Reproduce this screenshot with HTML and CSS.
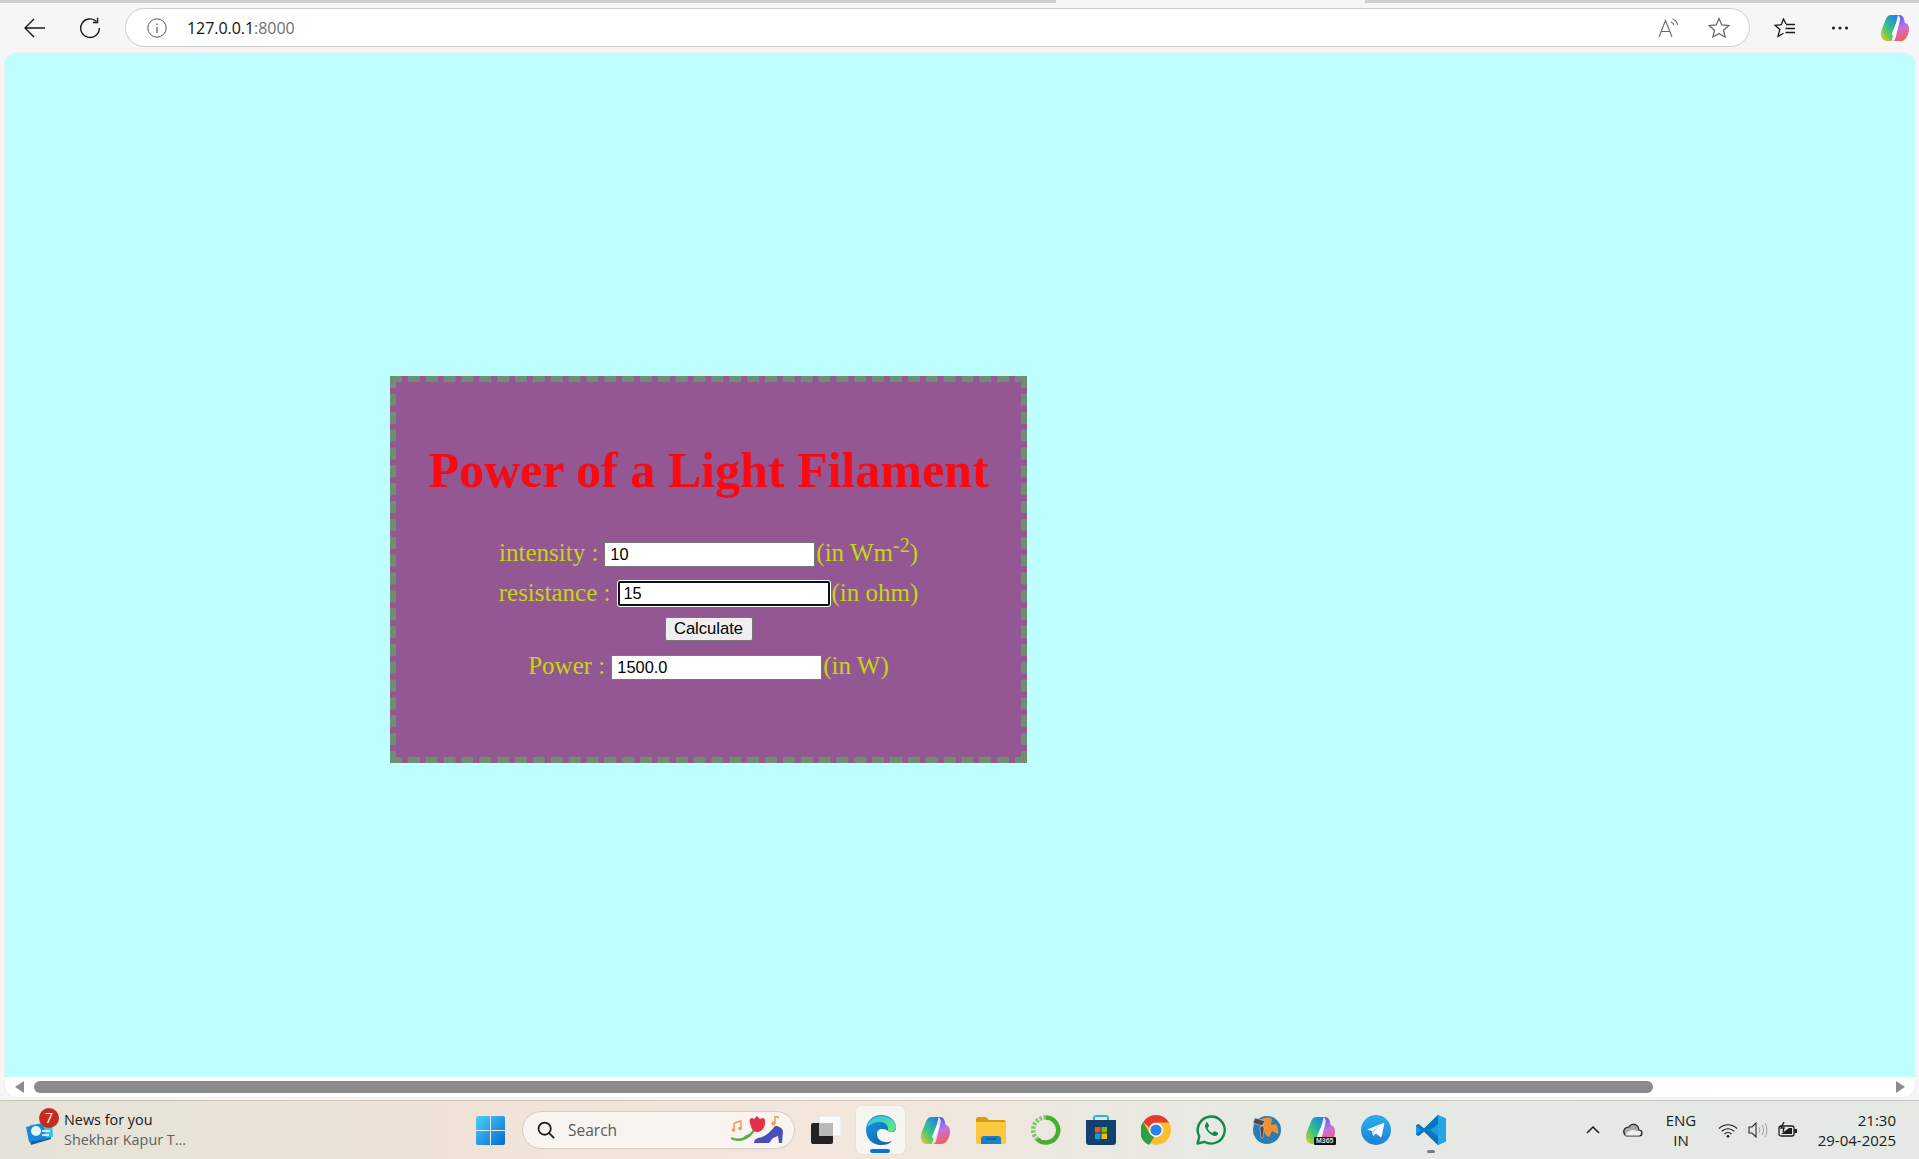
FILE: index.html
```html
<!DOCTYPE html>
<html lang="en">
<head>
<meta charset="utf-8">
<title>Power of a Light Filament</title>
<link rel="stylesheet" href="styles.css">
</head>
<body>
<svg class="defs" width="0" height="0" aria-hidden="true">
  <defs>
    <linearGradient id="cpA" x1="0" y1="1" x2="0.800" y2="0"><stop offset="0" stop-color="#f7c81e"/><stop offset=".45" stop-color="#3fc876"/><stop offset="1" stop-color="#1a86ee"/></linearGradient>
    <linearGradient id="cpB" x1="0.300" y1="0" x2="0.600" y2="1"><stop offset="0" stop-color="#3f63f0"/><stop offset=".5" stop-color="#c76fe6"/><stop offset="1" stop-color="#f4604a"/></linearGradient>
    <symbol id="copilot" viewBox="0 0 28 28">
      <path d="M10 1h7l-6 25c-.5 1-1 1-2 1H6C2 27 0 24 0 20c0-2 .5-4 1.500-6.500L5 5C6 2.500 7.500 1 10 1z" fill="url(#cpA)"/>
      <path d="M16 1h2c2.500 0 4 1 4.800 3.500L24 9c3 .5 4 3 4 6 0 2-.5 4-1.500 6.500C25 25 23 27 20 27h-9c2 0 3-1 3.500-3L19 6c.5-2-1-5-3-5z" fill="url(#cpB)"/>
      <path d="M16.500 9.500 12 20" stroke="#fff" stroke-width="2.800" stroke-linecap="round"/>
    </symbol>
  </defs>
</svg>
<div class="screen">
  <div class="tabstrip"><span class="tab-a"></span><span class="tab-gap"></span><span class="tab-b"></span></div>
  <header class="toolbar">
    <button class="tool tool-back" aria-label="Back">
      <svg width="22" height="22" viewBox="0 0 22 22" fill="none" stroke="#1a1a1a" stroke-width="1.400"><path d="M1 11H21M10 2 1 11l9 9"/></svg>
    </button>
    <button class="tool tool-reload" aria-label="Reload">
      <svg width="22" height="22" viewBox="0 0 22 22" fill="none" stroke="#1a1a1a" stroke-width="1.400"><path d="M17.500 4.500A9.300 9.300 0 1 0 20.300 11"/><path d="M18.600 0.800v4.700h-4.700"/></svg>
    </button>
    <div class="address">
      <svg class="info" width="20" height="20" viewBox="0 0 20 20" fill="none" stroke="#555"><circle cx="10" cy="10" r="9.200"/><path d="M10 9v6M10 5.500v1.400" stroke-width="1.200"/></svg>
      <span class="url">127.0.0.1<span class="url-port">:8000</span></span>
      <span class="address-space"></span>
      <svg width="22" height="20" viewBox="0 0 22 20" fill="none" stroke="#6b6b6b" stroke-width="1.100"><path d="M1 19 7.500 2.500 14 19M3.300 13.500h8.400"/><path d="M13 4c1.600.6 2.600 1.700 3 3.300M14.500 1c2.800 1 4.500 3 5.200 5.800"/></svg>
      <svg class="star" width="22" height="21" viewBox="0 0 22 21" fill="none" stroke="#6b6b6b" stroke-width="1.300"><path d="M11 1.500 13.800 8l7 .6-5.300 4.600 1.600 6.800-6.100-3.600L4.900 20l1.600-6.800L1.200 8.600l7-.6z"/></svg>
    </div>
    <button class="tool tool-fav" aria-label="Favorites">
      <svg width="22" height="20" viewBox="0 0 22 20" fill="none" stroke="#1a1a1a" stroke-width="1.300"><path d="M12 6 9.500 1 7.300 6.700 1 7.300l4.800 4.200L4 18.500l5.500-3.300"/><path d="M12 6.500h9M11.500 10.500h9.500M11.500 14.500h9.500"/></svg>
    </button>
    <button class="tool tool-more" aria-label="More">
      <svg width="18" height="4" viewBox="0 0 18 4" fill="#1a1a1a"><circle cx="2.500" cy="2" r="1.500"/><circle cx="9" cy="2" r="1.500"/><circle cx="15.500" cy="2" r="1.500"/></svg>
    </button>
    <button class="tool tool-copilot" aria-label="Copilot">
      <svg width="28" height="28"><use href="#copilot"/></svg>
    </button>
  </header>

  <div class="window">
    <main class="page">
      <section class="card">
        <h1 class="title">Power of a Light Filament</h1>
        <form class="form">
          <div class="row row-intensity">
            <label class="field-label">intensity :</label>
            <input class="field" type="text" value="10"><span class="unit">(in Wm<sup class="exp">-2</sup>)</span>
          </div>
          <div class="row row-resistance">
            <label class="field-label">resistance :</label>
            <input class="field field-focus" type="text" value="15"><span class="unit">(in ohm)</span>
          </div>
          <div class="row row-button">
            <button class="calc" type="button">Calculate</button>
          </div>
          <div class="row row-power">
            <label class="field-label">Power :</label>
            <input class="field" type="text" value="1500.0"><span class="unit">(in W)</span>
          </div>
        </form>
      </section>
    </main>
    <div class="hscroll">
      <span class="arrow arrow-left"></span>
      <div class="track"><div class="thumb"></div></div>
      <span class="arrow arrow-right"></span>
    </div>
  </div>

  <footer class="taskbar">
    <div class="news">
      <span class="news-icon">
        <svg width="30" height="32" viewBox="0 0 30 32"><path d="M3 18 25 14l1 10-20 6z" fill="#14609f"/><path d="M5 10 27 7l1 15-22 3z" fill="#33c3e8"/><path d="M1 12 18 8l3 16-17 3z" fill="#1c86d8"/><path d="M17 16h8M17 20h7" stroke="#fff" stroke-width="1.600"/><circle cx="11" cy="16" r="5" fill="#e6f6ff"/></svg>
        <span class="badge">7</span>
      </span>
      <span class="news-text"><span class="news-title">News for you</span><span class="news-sub">Shekhar Kapur T...</span></span>
    </div>
    <div class="apps">
      <span class="app app-start">
        <svg width="29" height="29" viewBox="0 0 30 30"><defs><linearGradient id="winG" x1="0" y1="0" x2="1" y2="1"><stop offset="0" stop-color="#4fd0fb"/><stop offset="1" stop-color="#0669c8"/></linearGradient></defs><rect width="30" height="30" rx="2" fill="url(#winG)"/><path d="M15 0v30M0 15h30" stroke="#e8f3f8" stroke-width="1"/></svg>
      </span>
      <div class="search">
        <svg width="18" height="18" viewBox="0 0 20 20" fill="none" stroke="#1c1c1c" stroke-width="2"><circle cx="8.500" cy="8.500" r="6.800"/><path d="m13.200 13.200 5.800 5.800"/></svg>
        <span class="search-text">Search</span>
        <svg class="search-art" width="52" height="28" viewBox="0 0 52 28"><path d="M0 22c6 3 14 2 19-3 2-2 3-3 4-5" fill="none" stroke="#5bab48" stroke-width="2.400"/><path d="M12 22c2-3 5-4 8-4-1 3-4 5-8 4z" fill="#5bab48"/><path d="M19 7c-1-3 0-5 2-5l2 1 3-3 3 3 3-1c2 0 2 3 2 5 0 5-4 9-8 9-4 0-6-4-7-9z" fill="#e5304a"/><path d="M23 27c0-4 3-5 8-6 5-2 9-6 13-11 4 0 7 2 8 5l-1 12h-3l-1-7-5 2-4 5z" fill="#4a4fb8"/><path d="M3 7l7-2v7M3 7v7" stroke="#f09a50" stroke-width="1.500" fill="none"/><circle cx="2.500" cy="14" r="1.800" fill="#f09a50"/><circle cx="9" cy="12.500" r="1.800" fill="#f09a50"/><path d="M44 7V0l4 1.500" stroke="#f09a50" stroke-width="1.500" fill="none"/><circle cx="42.500" cy="7.500" r="2" fill="#f09a50"/></svg>
      </div>
      <span class="app">
        <svg width="30" height="28" viewBox="0 0 30 28"><rect x="8" y="0" width="22" height="20" fill="#fafafa" stroke="#e3e3e3"/><rect y="7" width="22" height="21" rx="2" fill="#222"/><rect x="8" y="7" width="14" height="13" fill="#b9b9b9"/></svg>
      </span>
      <span class="app app-active">
        <svg width="30" height="30" viewBox="0 0 30 30"><defs><linearGradient id="edgeA" x1="0" y1="0" x2="1" y2="1"><stop offset="0" stop-color="#1b9de2"/><stop offset="1" stop-color="#0c59a4"/></linearGradient><linearGradient id="edgeB" x1="0" y1="0" x2="1" y2="1"><stop offset="0" stop-color="#35c1f1"/><stop offset="1" stop-color="#66eb6e"/></linearGradient></defs><path d="M15 0C6 0 0 7 0 15c0 9 7 15 15 15 5 0 8-1 11-4-7 3-15 0-15-7 0-3 2-5 5-5s6 1 7 3h2c4 0 5-2 5-5C30 5 23 0 15 0z" fill="url(#edgeA)"/><path d="M1 12C3 5 9 1 15 1c8 0 15 5 15 11 0 3-3 5-6 5-3 0-2-1-2-3 0-4-3-7-8-7-6 0-11 3-13 5z" fill="url(#edgeB)"/></svg>
        <span class="active-bar"></span>
      </span>
      <span class="app">
        <svg width="29" height="29"><use href="#copilot"/></svg>
      </span>
      <span class="app">
        <svg width="30" height="27" viewBox="0 0 30 27"><path d="M0 2c0-1 1-2 2-2h8l3 3h15c1 0 2 1 2 2v3H0z" fill="#d89c10"/><path d="M0 5h30v20c0 1-1 2-2 2H2c-1 0-2-1-2-2z" fill="#fcc93e"/><path d="M5 27v-5c0-2 1-3 3-3h14c2 0 3 1 3 3v5z" fill="#1a80c8"/><path d="M10 22h10" stroke="#0c4f85" stroke-width="1.200"/></svg>
      </span>
      <span class="app">
        <svg width="30" height="30" viewBox="0 0 30 30" fill="none"><path d="M15 2.500A12.500 12.500 0 1 1 6 24" stroke="#45b02d" stroke-width="4.500"/><path d="M15 2.500A12.500 12.500 0 0 0 6 24" stroke="#7cc66a" stroke-width="4.500" stroke-dasharray="2.500 1.500"/></svg>
      </span>
      <span class="app">
        <svg width="30" height="31" viewBox="0 0 30 31"><path d="M8 6V3c0-1 1-2 2-2h10c1 0 2 1 2 2v3" fill="none" stroke="#27b6e8" stroke-width="2"/><path d="M0 5h30v22c0 2-1 3-3 3H3c-2 0-3-1-3-3z" fill="#12416f"/><rect x="9" y="12" width="5.500" height="5.500" fill="#f25022"/><rect x="15.500" y="12" width="5.500" height="5.500" fill="#7fba00"/><rect x="9" y="18.500" width="5.500" height="5.500" fill="#00a4ef"/><rect x="15.500" y="18.500" width="5.500" height="5.500" fill="#ffb900"/></svg>
      </span>
      <span class="app">
        <svg width="30" height="30" viewBox="0 0 30 30"><circle cx="15" cy="15" r="15" fill="#fbc02d"/><path d="M15 0a15 15 0 0 1 13 7.500H15a7.500 7.500 0 0 0-7 4.700L2.300 7A15 15 0 0 1 15 0z" fill="#e53935"/><path d="M2.300 7 8.500 18.500 13 22.300 8 30A15 15 0 0 1 2.300 7z" fill="#2e9e48"/><circle cx="15" cy="15" r="7" fill="#fff"/><circle cx="15" cy="15" r="5.600" fill="#2f7ff0"/></svg>
      </span>
      <span class="app">
        <svg width="30" height="30" viewBox="0 0 30 30" fill="none"><path d="M1.500 28.500 3.300 21.500A13.500 13.500 0 1 1 8.500 26.800z" stroke="#12894a" stroke-width="2.400" stroke-linejoin="round"/><path d="M10.500 8c-1.500 1-2 3-1 5 1.500 3.500 4 6 7.500 7.500 2 1 4 .4 5-1 .5-1 0-1.700-1-2.200l-2-1c-.8-.3-1.300 0-1.800.8-.5.700-1 .8-1.800.3-1.500-.8-2.700-2-3.500-3.500-.4-.8-.3-1.200.4-1.800.7-.6.9-1.100.6-1.900l-.9-2c-.4-1-1.500-1.200-2.500-.4z" fill="#12894a"/></svg>
      </span>
      <span class="app">
        <svg width="30" height="30" viewBox="0 0 30 30"><circle cx="16" cy="15" r="14" fill="#2a7cb5"/><path d="M10 4c4-2 8-2 11 0l-1 6 5-1c2 3 3 7 2 10l-6-3-3 6c-3-1-5-4-5-7l-4-4z" fill="#ef8f33"/><path d="M4 3l10 3-3 5-9-3zM11 10l2 3-1 10h-2l-1-10z" fill="#4a4a4a" stroke="#ccc" stroke-width=".6"/></svg>
      </span>
      <span class="app">
        <svg width="29" height="29"><use href="#copilot"/></svg>
        <span class="m365">M365</span>
      </span>
      <span class="app">
        <svg width="30" height="30" viewBox="0 0 30 30"><defs><linearGradient id="tgG" x1="0.500" y1="0" x2="0.500" y2="1"><stop offset="0" stop-color="#2ab0ec"/><stop offset="1" stop-color="#1b80d8"/></linearGradient></defs><circle cx="15" cy="15" r="15" fill="url(#tgG)"/><path d="M6 14.500 22 8.200c.8-.3 1.400.2 1.200 1.100L20.700 21c-.2 1-.8 1.200-1.600.7l-4.200-3.100-2 2c-.4.400-.8.300-1-.3L11 16z" fill="#fff"/><path d="m11 16 8-5.500-6 6.500-.6 3.600z" fill="#b7d8ee"/></svg>
      </span>
      <span class="app app-code">
        <svg width="30" height="30" viewBox="0 0 30 30"><path d="M22 0 30 3.500v23L22 30 8 16.500 2.500 21 0 19.500V10.500L2.500 9 8 13.500z" fill="#1e9ae0"/><path d="M22 0 8 13.500 2.500 9 0 10.500 5 15 0 19.500l2.500 1.500L8 16.500 22 30V21L14 15l8-6z" fill="#0a76bd"/><path d="M22 0 30 3.500v23L22 30z" fill="#26a5e6"/></svg>
        <span class="code-bar"></span>
      </span>
    </div>
    <div class="tray">
      <svg class="tray-chev" width="14" height="8" viewBox="0 0 14 8" fill="none" stroke="#1a1a1a" stroke-width="1.500"><path d="M1 7 7 1l6 6"/></svg>
      <svg class="tray-cloud" width="20" height="14" viewBox="0 0 20 14"><path d="M5 13h11c4 0 4-6 0-6-1-7-8-7-10-3C2 4 0 7 1 10c.5 2 2 3 4 3z" fill="#a7a7a7" stroke="#1f1f1f" stroke-width="1.200"/><path d="M2 12.500c1-3 4-5 7-5.500 3 .5 6 1 8 1 2 2 0 4.500-1 4.500z" fill="#eee" stroke="none"/></svg>
      <span class="lang"><span>ENG</span><span>IN</span></span>
      <svg class="tray-wifi" width="20" height="15" viewBox="0 0 20 15" fill="none" stroke="#1a1a1a" stroke-width="1.200"><path d="M1 5.500c5-5 13-5 18 0M3.800 8.300c3.500-3.400 9-3.400 12.400 0M6.500 11c2-1.800 5-1.800 7 0"/><circle cx="10" cy="13.200" r="1.300" fill="#1a1a1a" stroke="none"/></svg>
      <svg class="tray-vol" width="20" height="16" viewBox="0 0 20 16" fill="none" stroke="#2a2a2a" stroke-width="1.100"><path d="M1 5v6h3l4 4V1L4 5z"/><path d="M11 5c1 2 1 4 0 6M14 3c1.800 3 1.800 7 0 10M17 1c2.500 4 2.500 10 0 14" stroke="#aaa"/></svg>
      <svg class="tray-batt" width="20" height="16" viewBox="0 0 20 16" fill="none"><rect x="1" y="4" width="15" height="10" rx="2" stroke="#1a1a1a" stroke-width="1.300"/><rect x="16.500" y="7" width="2.500" height="4" fill="#1a1a1a"/><path d="M3 12 11 6h3v6z" fill="#1a1a1a"/><path d="M6 0 3 6h3l-1 4" stroke="#1a1a1a" stroke-width="1.300"/></svg>
      <span class="clock"><span>21:30</span><span>29-04-2025</span></span>
    </div>
  </footer>
</div>
</body>
</html>
```
FILE: styles.css
```css
* { box-sizing: border-box; }
html, body { margin: 0; padding: 0; height: 100%; overflow: hidden; }
body { font-family: "Open Sans", "Noto Sans", sans-serif; background: #f6f6f6; }
.defs { position: absolute; }
.screen { width: 1919px; height: 1159px; display: flex; flex-direction: column; background: #f6f6f6; }

.tabstrip { height: 3px; display: flex; flex: none; }
.tab-a { width: 1056px; background: #cfcfcf; }
.tab-gap { width: 309px; background: #f6f6f6; }
.tab-b { flex: 1; background: #cfcfcf; }

.toolbar { height: 50px; flex: none; display: flex; align-items: center; padding: 0 0 1px 24px; }
.tool { border: 0; background: none; padding: 0; display: flex; align-items: center; justify-content: center; height: 30px; width: 22px; }
.tool-back { margin-right: 33px; }
.tool-reload { margin-right: 24px; }
.address { width: 1625px; height: 39px; display: flex; align-items: center; background: #fff; border: 1px solid #cdcdcd; border-radius: 20px; padding: 0 19px 0 21px; }
.info { flex: none; margin-right: 20px; }
.url { font-size: 16px; color: #111; letter-spacing: -0.05px; }
.url-port { color: #6f6f6f; }
.address-space { flex: 1; }
.star { margin-left: 28px; }
.tool-fav { margin-left: 24px; }
.tool-more { margin-left: 33px; }
.tool-copilot { margin-left: 30px; width: 28px; }

.window { flex: none; height: 1044px; margin: 0 4px 0 5px; display: flex; flex-direction: column; background: #fff; border-radius: 12px; overflow: hidden; box-shadow: 0 0 1px rgba(0,0,0,.25); }
.page { height: 1024px; flex: none; background: #bfffff; padding: 323px 0 0 385px; }

.card { width: 637px; height: 387px; background: #935893; border: 6px dashed #6f8f72; text-align: center; font-family: "Liberation Serif", "Times New Roman", serif; color: #c8d60e; }
.title { margin: 0; padding-top: 61px; font-size: 50px; line-height: 55px; font-weight: 700; color: #f90a12; }
.form { margin-top: 42px; font-size: 25px; line-height: 27px; }
.row { display: flex; justify-content: center; align-items: center; }
.row-intensity { height: 27px; }
.row-resistance { height: 27px; margin-top: 13px; }
.row-button { height: 24px; margin-top: 10px; }
.row-power { height: 27px; margin-top: 12px; }
.field-label { margin-right: 6px; margin-bottom: 3px; white-space: pre; }
.row-resistance .field-label { margin-right: 7px; }
.field { width: 211px; height: 25px; font: 16.4px "Liberation Sans", Arial, sans-serif; color: #000; background: #fff; border: 1px solid #767676; padding: 1px 5px; margin: 2px 0 0; border-radius: 0; }
.field-focus { width: 214px; height: 27px; margin: 0; outline: 2px solid #101010; outline-offset: -3px; border: 1px solid #fff; border-radius: 3px; padding: 1px 5px; }
.unit { margin-left: 1px; margin-bottom: 3px; white-space: pre; }
.row-resistance .unit { margin-left: 0; }
.exp { font-size: 20px; line-height: 0; vertical-align: super; }
.calc { width: 88px; height: 24px; padding: 0; font: 16.6px "Liberation Sans", Arial, sans-serif; color: #000; background: #efefef; border: 1px solid #767676; border-radius: 2px; }

.hscroll { height: 20px; flex: none; background: #fff; display: flex; align-items: center; padding: 0 10px; }
.arrow { width: 0; height: 0; border-style: solid; border-width: 6px 0; border-color: transparent; flex: none; }
.arrow-left { border-right: 9px solid #8b8b8b; }
.arrow-right { border-left: 9px solid #8b8b8b; }
.track { flex: 1; padding: 0 0 0 10px; }
.thumb { width: 1619px; height: 12px; background: #8b8b8b; border-radius: 6px; }

.taskbar { margin-top: 3px; flex: 1; display: flex; align-items: center; border-top: 1px solid #c8c5c0; background: linear-gradient(90deg, #e4e3d9 0%, #f0e3d8 25%, #f3e6dc 45%, #e7e9e2 62%, #e4e9e6 100%); }
.news { width: 489px; flex: none; display: flex; align-items: center; padding-left: 25px; color: #1a1a1a; }
.news-icon { position: relative; width: 39px; height: 32px; flex: none; margin-top: 2px; }
.badge { position: absolute; left: 14px; top: -7px; width: 20px; height: 20px; border-radius: 50%; background: #c42b1c; color: #fff; font-size: 14px; line-height: 20px; text-align: center; }
.news-text { display: flex; flex-direction: column; font-size: 14.4px; line-height: 20px; }
.news-sub { color: #5f5f5f; }

.apps { display: flex; align-items: center; flex: none; height: 100%; margin-left: -14px; }
.app { width: 55px; height: 48px; display: flex; align-items: center; justify-content: center; position: relative; flex: none; }
.app-start { width: 30px; margin-right: 17px; }
.app-active::before { content: ""; position: absolute; inset: 0 3px; background: #f7f5f0; border-radius: 5px; box-shadow: 0 0 1px rgba(0,0,0,.2); }
.app-active svg { position: relative; }
.active-bar { position: absolute; left: 17px; bottom: 1px; width: 20px; height: 4px; border-radius: 2px; background: #0a74d4; }
.code-bar { position: absolute; left: 24px; bottom: 1px; width: 8px; height: 3px; border-radius: 2px; background: #7c7c7c; }
.m365 { position: absolute; left: 21px; bottom: 9px; background: #111; color: #ddd; font: 700 7px/8px "Liberation Sans", sans-serif; padding: 0 2px; border-radius: 1px; }
.search { width: 273px; height: 38px; flex: none; display: flex; align-items: center; background: #f9f4ef; border: 1px solid #d5cdc5; border-radius: 19px; padding: 0 11px 0 14px; margin-right: 3px; font-size: 15.5px; color: #5a5a5a; }
.search-text { margin-left: 13px; flex: 1; }
.search-art { flex: none; }

.tray { margin-left: auto; display: flex; align-items: center; padding-right: 23px; color: #1a1a1a; font-size: 15px; line-height: 20px; }
.tray-chev { margin-right: 23px; }
.tray-cloud { margin-right: 19px; }
.lang { width: 38px; display: flex; flex-direction: column; align-items: center; margin-right: 18px; }
.tray-wifi { margin-right: 10px; }
.tray-vol { margin-right: 10px; }
.tray-batt { margin-right: 18px; }
.clock { display: flex; flex-direction: column; align-items: flex-end; width: 80px; white-space: nowrap; }
```
